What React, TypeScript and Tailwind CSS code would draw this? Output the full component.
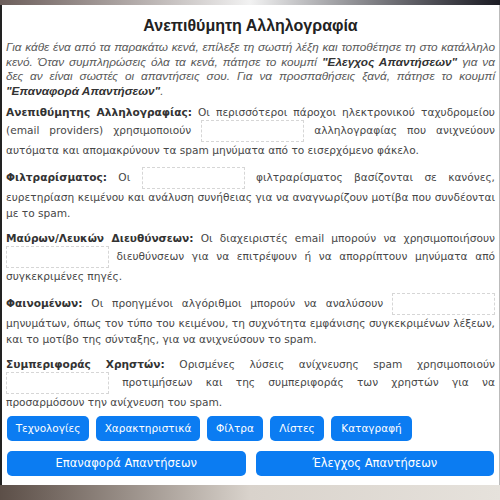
import React from "react";

const Blank = () => (
  <span className="inline-block w-[103px] h-[22px] align-middle border border-dashed border-[#d6d6d6] bg-white"></span>
);

const topButtons = [
  { label: "Τεχνολογίες", w: "w-[82px]" },
  { label: "Χαρακτηριστικά", w: "w-[104px]" },
  { label: "Φίλτρα", w: "w-[56px]" },
  { label: "Λίστες", w: "w-[54px]" },
  { label: "Καταγραφή", w: "w-[81px]" },
];

export default function App() {
  return (
    <div className="w-[500px] h-[500px] flex flex-col bg-[#c9c3bb] overflow-hidden" style={{ fontFamily: '"Liberation Sans", Arial, sans-serif' }}>
      <div className="h-[5px] bg-gradient-to-r from-[#6d5f5c] via-[#f2f2f2] to-[#1c1c24]"></div>
      <div className="h-[480px] bg-white border-l-2 border-l-[#222] border-r border-r-[#bbb] px-[4px] pt-[11px] flex flex-col">
        <h1 className="text-center text-[16px] font-bold text-[#222] leading-[20px]">Ανεπιθύμητη Αλληλογραφία</h1>
        <p className="mt-[4px] text-[11.8px] leading-[14.7px] italic text-[#5a5a5a] text-justify">
          Για κάθε ένα από τα παρακάτω κενά, επίλεξε τη σωστή λέξη και τοποθέτησε τη στο κατάλληλο κενό. Όταν συμπληρώσεις όλα τα κενά, πάτησε το κουμπί <b className="text-[#333]">"Ελεγχος Απαντήσεων"</b> για να δες αν είναι σωστές οι απαντήσεις σου. Για να προσπαθήσεις ξανά, πάτησε το κουμπί <b className="text-[#333]">"Επαναφορά Απαντήσεων"</b>.
        </p>
        <div className="mt-[5px] flex flex-col gap-[9px] text-[10.6px] leading-[16px] text-[#474747] text-justify" style={{ fontFamily: '"DejaVu Sans", Verdana, sans-serif' }}>
          <p>
            <b className="text-[#333]">Ανεπιθύμητης Αλληλογραφίας:</b> Οι περισσότεροι πάροχοι ηλεκτρονικού ταχυδρομείου (email providers) χρησιμοποιούν <Blank /> αλληλογραφίας που ανιχνεύουν αυτόματα και απομακρύνουν τα spam μηνύματα από το εισερχόμενο φάκελο.
          </p>
          <p>
            <b className="text-[#333]">Φιλτραρίσματος:</b> Οι <Blank /> φιλτραρίσματος βασίζονται σε κανόνες, ευρετηρίαση κειμένου και ανάλυση συνήθειας για να αναγνωρίζουν μοτίβα που συνδέονται με το spam.
          </p>
          <p>
            <b className="text-[#333]">Μαύρων/Λευκών Διευθύνσεων:</b> Οι διαχειριστές email μπορούν να χρησιμοποιήσουν <Blank /> διευθύνσεων για να επιτρέψουν ή να απορρίπτουν μηνύματα από συγκεκριμένες πηγές.
          </p>
          <p>
            <b className="text-[#333]">Φαινομένων:</b> Οι προηγμένοι αλγόριθμοι μπορούν να αναλύσουν <Blank /> μηνυμάτων, όπως τον τύπο του κειμένου, τη συχνότητα εμφάνισης συγκεκριμένων λέξεων, και το μοτίβο της σύνταξης, για να ανιχνεύσουν το spam.
          </p>
          <p>
            <b className="text-[#333]">Συμπεριφοράς Χρηστών:</b> Ορισμένες λύσεις ανίχνευσης spam χρησιμοποιούν <Blank /> προτιμήσεων και της συμπεριφοράς των χρηστών για να προσαρμόσουν την ανίχνευση του spam.
          </p>
        </div>
        <div className="mt-auto pb-[9px] flex flex-col gap-[10px]" style={{ fontFamily: '"DejaVu Sans", Verdana, sans-serif' }}>
          <div className="flex gap-[7px] px-[1px]">
            {topButtons.map((b) => (
              <button key={b.label} className={`${b.w} h-[25px] rounded-[5px] bg-[#0b7cf2] text-white text-[10.5px]`}>
                {b.label}
              </button>
            ))}
          </div>
          <div className="grid grid-cols-2 gap-[10px] px-[1px]">
            <button className="h-[25px] rounded-[5px] bg-[#0b7cf2] text-white text-[11.5px]">Επαναφορά Απαντήσεων</button>
            <button className="h-[25px] rounded-[5px] bg-[#0b7cf2] text-white text-[11.5px]">Έλεγχος Απαντήσεων</button>
          </div>
        </div>
      </div>
      <div className="flex-1 bg-gradient-to-r from-[#5c4f48] via-[#d9d3cc] to-[#e6e2dc]"></div>
    </div>
  );
}
